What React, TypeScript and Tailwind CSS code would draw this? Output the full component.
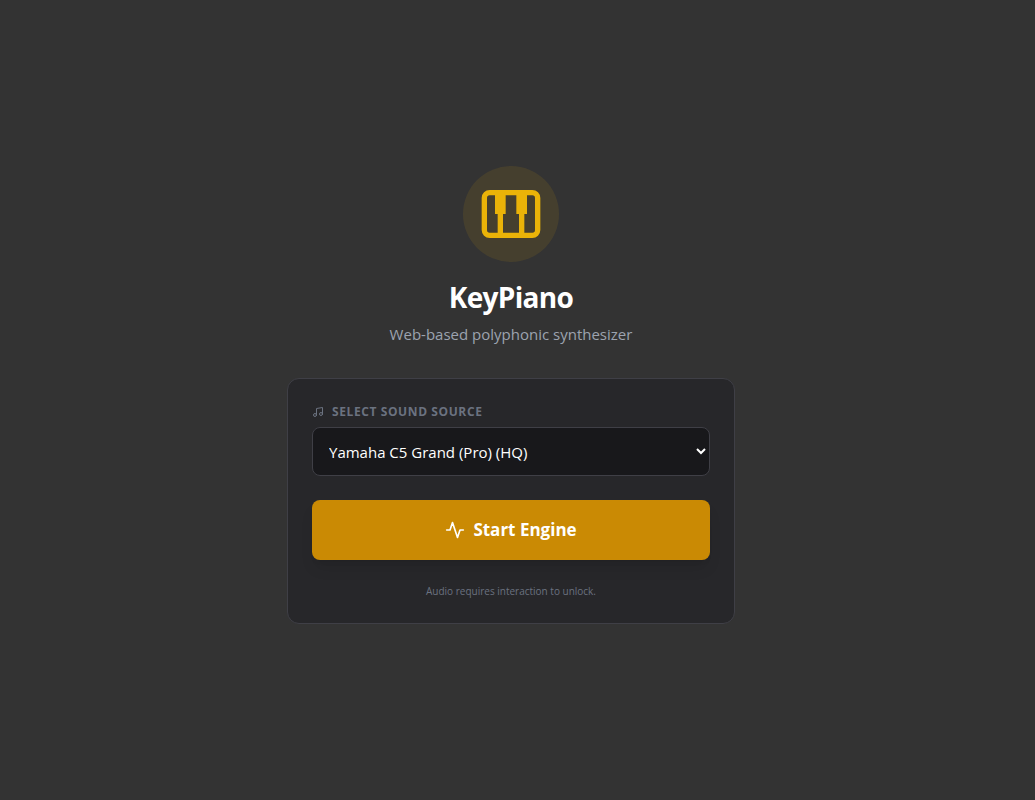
import { useState } from "react";
import { Music } from "lucide-react";

const SOURCES = ["Yamaha C5 Grand (Pro) (HQ)"];

function PianoIcon() {
  return (
    <svg viewBox="0 0 24 24" fill="currentColor" className="size-16" aria-hidden="true">
      <path
        fillRule="evenodd"
        clipRule="evenodd"
        d="M4 21a3 3 0 0 1-3-3V6a3 3 0 0 1 3-3h16a3 3 0 0 1 3 3v12a3 3 0 0 1-3 3H4ZM4 5a1 1 0 0 0-1 1v12a1 1 0 0 0 1 1h3v-7H6V5H4ZM9 19h6v-7h-1V5h-4v7H9v7ZM17 19h3a1 1 0 0 0 1-1V6a1 1 0 0 0-1-1h-2v7h-1v7Z"
      />
    </svg>
  );
}

function ActivityIcon() {
  return (
    <svg
      viewBox="0 0 24 24"
      fill="none"
      stroke="currentColor"
      strokeWidth="2"
      strokeLinecap="round"
      strokeLinejoin="round"
      className="size-5"
      aria-hidden="true"
    >
      <path d="M22 12h-4l-3 9L9 3l-3 9H2" />
    </svg>
  );
}

export default function App() {
  const [source, setSource] = useState(SOURCES[0]);

  return (
    <main className="flex min-h-screen flex-col items-center justify-center bg-[#333333] pr-[13px] pb-[10px] font-['Open_Sans','Noto_Sans',sans-serif] text-white">
      <header className="mb-8 flex flex-col items-center text-center">
        <div className="mb-4 flex size-24 items-center justify-center rounded-full bg-[#eab308]/10 text-[#eab308]">
          <PianoIcon />
        </div>
        <h1 className="text-[28px] leading-[38px] font-bold tracking-tight">KeyPiano</h1>
        <p className="mt-1.5 text-[15px] leading-6 text-[#9ca3af]">Web-based polyphonic synthesizer</p>
      </header>

      <section className="w-full max-w-md rounded-xl border border-[#3f3f46] bg-[#27272a] p-6">
        <label
          htmlFor="source"
          className="mb-1.5 flex items-center gap-2 text-[12px] leading-[18px] font-bold tracking-wider text-[#6b7280] uppercase"
        >
          <Music size={12} aria-hidden="true" />
          Select Sound Source
        </label>
        <select
          id="source"
          value={source}
          onChange={(e) => setSource(e.target.value)}
          className="h-[49px] w-full rounded-lg border border-[#3f3f46] bg-[#18181b] px-3 text-[15px] text-white"
        >
          {SOURCES.map((s) => (
            <option key={s}>{s}</option>
          ))}
        </select>
        <button
          type="button"
          className="mt-6 flex w-full items-center justify-center gap-2 rounded-lg bg-[#ca8a04] py-4 text-[17px] leading-7 font-bold shadow-lg"
        >
          <ActivityIcon />
          Start Engine
        </button>
        <p className="mt-6 text-center text-[10px] leading-[15px] text-[#6b7280]">
          Audio requires interaction to unlock.
        </p>
      </section>
    </main>
  );
}
